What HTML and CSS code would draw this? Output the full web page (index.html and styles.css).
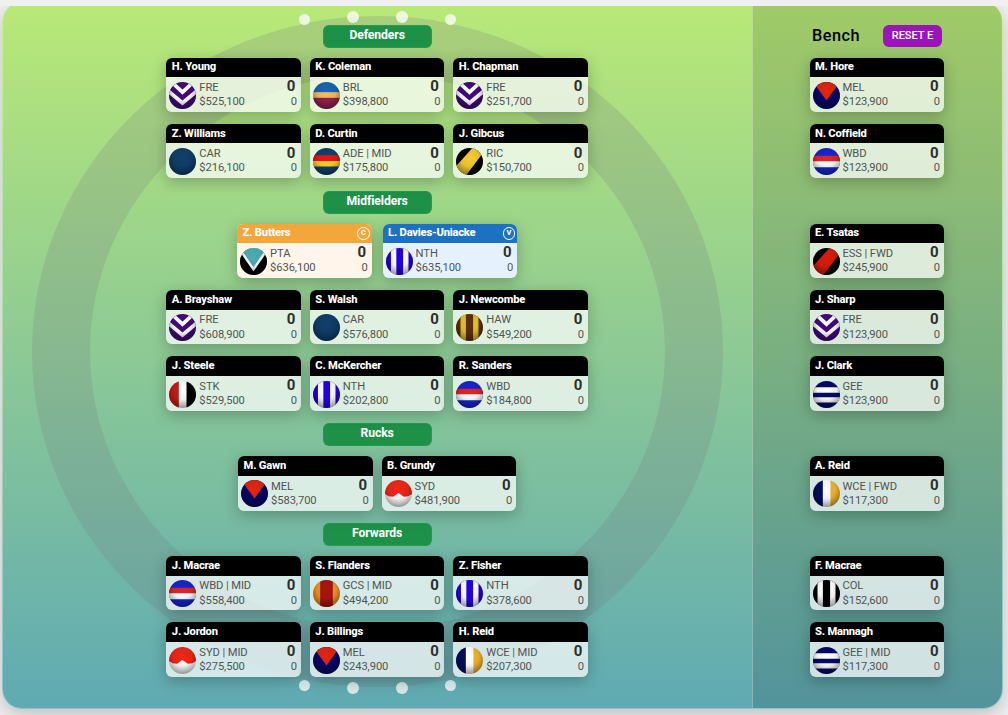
FILE: index.html
```
<!DOCTYPE html>
<html lang="en">
<head>
<meta charset="utf-8">
<title>Team lineup</title>
<link rel="stylesheet" href="styles.css">
</head>
<body>
<svg class="defs" width="0" height="0" aria-hidden="true">
  <defs>
    <clipPath id="round"><circle cx="15" cy="15" r="15"/></clipPath>
    <radialGradient id="shade" cx=".5" cy=".35" r=".68">
      <stop offset="0" stop-color="#000" stop-opacity="0"/>
      <stop offset=".5" stop-color="#000" stop-opacity=".06"/>
      <stop offset="1" stop-color="#000" stop-opacity=".45"/>
    </radialGradient>
    <symbol id="fre" viewBox="0 0 30 30"><g clip-path="url(#round)"><path fill="#43097f" d="M0 0h30v30H0z"/><path fill="none" stroke="#fff" stroke-width="4.2" d="M0-2.500 15 11.300 30-2.500M-1 10 15 23.300 31 10"/><path fill="url(#shade)" d="M0 0h30v30H0z"/></g></symbol>
    <symbol id="brl" viewBox="0 0 30 30"><g clip-path="url(#round)"><path fill="#1b65b3" d="M0 0h30v12H0z"/><path fill="#fdbe57" d="M0 11.500h30v6H0z"/><path fill="#96234f" d="M0 17.500h30v13H0z"/><path fill="url(#shade)" d="M0 0h30v30H0z"/></g></symbol>
    <symbol id="car" viewBox="0 0 30 30"><g clip-path="url(#round)"><path fill="#113e6c" d="M0 0h30v30H0z"/><path fill="url(#shade)" d="M0 0h30v30H0z"/></g></symbol>
    <symbol id="ade" viewBox="0 0 30 30"><g clip-path="url(#round)"><path fill="#14406c" d="M0 0h30v30H0z"/><path fill="#ee1413" d="M0 8h30v7H0z"/><path fill="#f9d22f" d="M0 14.500h30v6H0z"/><path fill="url(#shade)" d="M0 0h30v30H0z"/></g></symbol>
    <symbol id="ric" viewBox="0 0 30 30"><g clip-path="url(#round)"><path fill="#000" d="M0 0h30v30H0z"/><path fill="#f5ca36" d="M19-1h13v4L10 32H-2v-9.500z"/><path fill="url(#shade)" d="M0 0h30v30H0z"/></g></symbol>
    <symbol id="ess" viewBox="0 0 30 30"><g clip-path="url(#round)"><path fill="#000" d="M0 0h30v30H0z"/><path fill="#da1c0c" d="M19-1h13v4L10 32H-2v-9.500z"/><path fill="url(#shade)" d="M0 0h30v30H0z"/></g></symbol>
    <symbol id="mel" viewBox="0 0 30 30"><g clip-path="url(#round)"><path fill="#04066a" d="M0 0h30v30H0z"/><path fill="#e02613" d="M0 0h30L15 20.500z"/><path fill="url(#shade)" d="M0 0h30v30H0z"/></g></symbol>
    <symbol id="wbd" viewBox="0 0 30 30"><g clip-path="url(#round)"><path fill="#1725d2" d="M0 0h30v30H0z"/><path fill="#e02622" d="M0 8.500h30v6.500H0z"/><path fill="#fff" d="M0 14.800h30v6.700H0z"/><path fill="url(#shade)" d="M0 0h30v30H0z"/></g></symbol>
    <symbol id="pta" viewBox="0 0 30 30"><g clip-path="url(#round)"><path fill="#000" d="M0 0h30v30H0z"/><path fill="#fff" d="M-3 0h36L15 26z"/><path fill="#4eadb1" d="M-1-2h32L15 21.500z"/><path fill="url(#shade)" d="M0 0h30v30H0z"/></g></symbol>
    <symbol id="nth" viewBox="0 0 30 30"><g clip-path="url(#round)"><path fill="#2300e6" d="M0 0h30v30H0z"/><path fill="#fff" d="M5.500 0h6v30h-6zM19 0h6v30h-6z"/><path fill="url(#shade)" d="M0 0h30v30H0z"/></g></symbol>
    <symbol id="haw" viewBox="0 0 30 30"><g clip-path="url(#round)"><path fill="#5d300b" d="M0 0h30v30H0z"/><path fill="#e8c231" d="M5 0h6v30H5zM19 0h6v30h-6z"/><path fill="url(#shade)" d="M0 0h30v30H0z"/></g></symbol>
    <symbol id="col" viewBox="0 0 30 30"><g clip-path="url(#round)"><path fill="#000" d="M0 0h30v30H0z"/><path fill="#fff" d="M5 0h6v30H5zM19 0h6v30h-6z"/><path fill="url(#shade)" d="M0 0h30v30H0z"/></g></symbol>
    <symbol id="gcs" viewBox="0 0 30 30"><g clip-path="url(#round)"><path fill="#f59427" d="M0 0h30v30H0z"/><path fill="#a91513" d="M8 0h14v30H8z"/><path fill="url(#shade)" d="M0 0h30v30H0z"/></g></symbol>
    <symbol id="stk" viewBox="0 0 30 30"><g clip-path="url(#round)"><path fill="#c71d15" d="M0 0h11v30H0z"/><path fill="#fff" d="M11 0h8.500v30H11z"/><path fill="#000" d="M19.500 0H30v30H19.500z"/><path fill="url(#shade)" d="M0 0h30v30H0z"/></g></symbol>
    <symbol id="wce" viewBox="0 0 30 30"><g clip-path="url(#round)"><path fill="#030c61" d="M0 0h11v30H0z"/><path fill="#fff" d="M11 0h8.500v30H11z"/><path fill="#f2b52e" d="M19.500 0H30v30H19.500z"/><path fill="url(#shade)" d="M0 0h30v30H0z"/></g></symbol>
    <symbol id="gee" viewBox="0 0 30 30"><g clip-path="url(#round)"><path fill="#030a68" d="M0 0h30v30H0z"/><path fill="#fff" d="M0 7h30v6H0zM0 18h30v6H0z"/><path fill="url(#shade)" d="M0 0h30v30H0z"/></g></symbol>
    <symbol id="syd" viewBox="0 0 30 30"><g clip-path="url(#round)"><path fill="#fff" d="M0 0h30v30H0z"/><path fill="#f02718" d="M0 0h30v15.500l-4 2.500-5 .5-6-4-6 4-5-.5-4-2.500z"/><path fill="url(#shade)" d="M0 0h30v30H0z"/></g></symbol>
  </defs>
</svg>
<div class="topbar"></div>
<main class="field">
  <div class="oval"></div>
  <i class="post" style="left:297px;top:12px"></i><i class="post tall" style="left:344.500px;top:8.500px"></i><i class="post tall" style="left:393.500px;top:8.500px"></i><i class="post" style="left:442.500px;top:12px"></i>
  <i class="post" style="left:297px;top:678px"></i><i class="post tall" style="left:344.500px;top:680px"></i><i class="post tall" style="left:393.500px;top:680px"></i><i class="post" style="left:442.500px;top:678px"></i>

  <section class="ground">
    <h2 class="line">Defenders</h2>
    <div class="row">
      <article class="card"><h3>H. Young</h3><div class="info"><svg><use href="#fre"/></svg><p>FRE<br>$525,100</p><p class="score"><b>0</b>0</p></div></article>
      <article class="card"><h3>K. Coleman</h3><div class="info"><svg><use href="#brl"/></svg><p>BRL<br>$398,800</p><p class="score"><b>0</b>0</p></div></article>
      <article class="card"><h3>H. Chapman</h3><div class="info"><svg><use href="#fre"/></svg><p>FRE<br>$251,700</p><p class="score"><b>0</b>0</p></div></article>
    </div>
    <div class="row">
      <article class="card"><h3>Z. Williams</h3><div class="info"><svg><use href="#car"/></svg><p>CAR<br>$216,100</p><p class="score"><b>0</b>0</p></div></article>
      <article class="card"><h3>D. Curtin</h3><div class="info"><svg><use href="#ade"/></svg><p>ADE | MID<br>$175,800</p><p class="score"><b>0</b>0</p></div></article>
      <article class="card"><h3>J. Gibcus</h3><div class="info"><svg><use href="#ric"/></svg><p>RIC<br>$150,700</p><p class="score"><b>0</b>0</p></div></article>
    </div>
    <h2 class="line">Midfielders</h2>
    <div class="row leaders">
      <article class="card captain"><h3>Z. Butters<span class="badge">C</span></h3><div class="info"><svg><use href="#pta"/></svg><p>PTA<br>$636,100</p><p class="score"><b>0</b>0</p></div></article>
      <article class="card vice"><h3>L. Davies-Uniacke<span class="badge">V</span></h3><div class="info"><svg><use href="#nth"/></svg><p>NTH<br>$635,100</p><p class="score"><b>0</b>0</p></div></article>
    </div>
    <div class="row">
      <article class="card"><h3>A. Brayshaw</h3><div class="info"><svg><use href="#fre"/></svg><p>FRE<br>$608,900</p><p class="score"><b>0</b>0</p></div></article>
      <article class="card"><h3>S. Walsh</h3><div class="info"><svg><use href="#car"/></svg><p>CAR<br>$576,800</p><p class="score"><b>0</b>0</p></div></article>
      <article class="card"><h3>J. Newcombe</h3><div class="info"><svg><use href="#haw"/></svg><p>HAW<br>$549,200</p><p class="score"><b>0</b>0</p></div></article>
    </div>
    <div class="row">
      <article class="card"><h3>J. Steele</h3><div class="info"><svg><use href="#stk"/></svg><p>STK<br>$529,500</p><p class="score"><b>0</b>0</p></div></article>
      <article class="card"><h3>C. McKercher</h3><div class="info"><svg><use href="#nth"/></svg><p>NTH<br>$202,800</p><p class="score"><b>0</b>0</p></div></article>
      <article class="card"><h3>R. Sanders</h3><div class="info"><svg><use href="#wbd"/></svg><p>WBD<br>$184,800</p><p class="score"><b>0</b>0</p></div></article>
    </div>
    <h2 class="line">Rucks</h2>
    <div class="row">
      <article class="card"><h3>M. Gawn</h3><div class="info"><svg><use href="#mel"/></svg><p>MEL<br>$583,700</p><p class="score"><b>0</b>0</p></div></article>
      <article class="card"><h3>B. Grundy</h3><div class="info"><svg><use href="#syd"/></svg><p>SYD<br>$481,900</p><p class="score"><b>0</b>0</p></div></article>
    </div>
    <h2 class="line">Forwards</h2>
    <div class="row">
      <article class="card"><h3>J. Macrae</h3><div class="info"><svg><use href="#wbd"/></svg><p>WBD | MID<br>$558,400</p><p class="score"><b>0</b>0</p></div></article>
      <article class="card"><h3>S. Flanders</h3><div class="info"><svg><use href="#gcs"/></svg><p>GCS | MID<br>$494,200</p><p class="score"><b>0</b>0</p></div></article>
      <article class="card"><h3>Z. Fisher</h3><div class="info"><svg><use href="#nth"/></svg><p>NTH<br>$378,600</p><p class="score"><b>0</b>0</p></div></article>
    </div>
    <div class="row">
      <article class="card"><h3>J. Jordon</h3><div class="info"><svg><use href="#syd"/></svg><p>SYD | MID<br>$275,500</p><p class="score"><b>0</b>0</p></div></article>
      <article class="card"><h3>J. Billings</h3><div class="info"><svg><use href="#mel"/></svg><p>MEL<br>$243,900</p><p class="score"><b>0</b>0</p></div></article>
      <article class="card"><h3>H. Reid</h3><div class="info"><svg><use href="#wce"/></svg><p>WCE | MID<br>$207,300</p><p class="score"><b>0</b>0</p></div></article>
    </div>
  </section>

  <aside class="bench">
    <header class="bench-head"><h2>Bench</h2><button class="reset" type="button">RESET E</button></header>
    <div class="group">
      <article class="card"><h3>M. Hore</h3><div class="info"><svg><use href="#mel"/></svg><p>MEL<br>$123,900</p><p class="score"><b>0</b>0</p></div></article>
      <article class="card"><h3>N. Coffield</h3><div class="info"><svg><use href="#wbd"/></svg><p>WBD<br>$123,900</p><p class="score"><b>0</b>0</p></div></article>
    </div>
    <div class="group">
      <article class="card"><h3>E. Tsatas</h3><div class="info"><svg><use href="#ess"/></svg><p>ESS | FWD<br>$245,900</p><p class="score"><b>0</b>0</p></div></article>
      <article class="card"><h3>J. Sharp</h3><div class="info"><svg><use href="#fre"/></svg><p>FRE<br>$123,900</p><p class="score"><b>0</b>0</p></div></article>
      <article class="card"><h3>J. Clark</h3><div class="info"><svg><use href="#gee"/></svg><p>GEE<br>$123,900</p><p class="score"><b>0</b>0</p></div></article>
    </div>
    <div class="group">
      <article class="card"><h3>A. Reid</h3><div class="info"><svg><use href="#wce"/></svg><p>WCE | FWD<br>$117,300</p><p class="score"><b>0</b>0</p></div></article>
    </div>
    <div class="group">
      <article class="card"><h3>F. Macrae</h3><div class="info"><svg><use href="#col"/></svg><p>COL<br>$152,600</p><p class="score"><b>0</b>0</p></div></article>
      <article class="card"><h3>S. Mannagh</h3><div class="info"><svg><use href="#gee"/></svg><p>GEE | MID<br>$117,300</p><p class="score"><b>0</b>0</p></div></article>
    </div>
  </aside>
</main>
</body>
</html>
```
FILE: styles.css
```
* { box-sizing: border-box; margin: 0; padding: 0; }
body {
  height: 715px;
  padding: 2px 5px 6.500px 2px;
  overflow: hidden;
  background: #f0f0f0;
  font-family: Roboto, "Liberation Sans", sans-serif;
}
.defs { position: absolute; }

/* header strip lying over the top edge of the field */
.topbar { position: absolute; inset: 0 0 auto; z-index: 3; height: 6px; background: #f0f0f0; }

.field {
  position: relative;
  display: flex;
  height: 706.500px;
  border: solid rgba(255, 255, 255, .3);
  border-width: 0 1px 1px;
  border-radius: 20px;
  background: linear-gradient(#b9e977, #5faab3) border-box;
  box-shadow: 0 6px 18px rgba(0, 0, 0, .2);
}
.oval {
  position: absolute;
  left: 29px;
  top: 14px;
  width: 691px;
  height: 671px;
  border: 58px solid rgba(115, 115, 125, .2);
  border-radius: 50%;
}
.post { position: absolute; width: 11px; height: 11px; margin-left: -1px; border-radius: 50%; background: rgba(255, 255, 255, .75); }
.post.tall { width: 12px; height: 12px; }

.ground { position: relative; width: 749px; padding: 22.500px .8px 0 0; }
.line {
  width: 109px;
  height: 23px;
  margin: 0 auto 10px;
  border: 1px solid rgba(40, 160, 85, .7);
  border-radius: 6px;
  background: #1e9148;
  color: #fff;
  font-size: 12.200px;
  font-weight: 700;
  line-height: 19.500px;
  letter-spacing: -.1px;
  text-align: center;
}
.row + .line { margin-top: .4px; }
.row { display: flex; justify-content: center; gap: 9px; height: 66.400px; }
.leaders { gap: 11px; }

.card {
  flex: none;
  width: 134.500px;
  height: 54.400px;
  overflow: hidden;
  border-radius: 6px;
  background: rgba(255, 255, 255, .72);
  box-shadow: 0 4px 15px rgba(0, 0, 0, .25);
}
.card h3 {
  display: flex;
  align-items: center;
  justify-content: space-between;
  height: 19.500px;
  padding: 0 2px 0 5.500px;
  background: #000;
  color: #fff;
  font-size: 11.200px;
  font-weight: 800;
  line-height: 18px;
  letter-spacing: -.22px;
  white-space: nowrap;
}
.info { display: flex; padding: 3.800px 4px 0 3px; color: #505552; font-size: 11.200px; line-height: 14.300px; letter-spacing: -.1px; }
.info svg { flex: none; width: 27px; height: 27px; margin: .8px 3px 0 0; }
.score { margin-left: auto; text-align: right; }
.score b { display: block; margin: -1.500px 1.500px 1.500px 0; color: #2b2f2d; font-size: 15px; font-weight: 700; }

.captain { background: #fff5ea; }
.captain h3 { background: #f3a63a; }
.vice { background: #e6f1fe; }
.vice h3 { background: #1c71c2; }
.badge {
  width: 12.500px;
  height: 12.500px;
  border: 1px solid #fff;
  border-radius: 50%;
  font-size: 7.500px;
  line-height: 10.500px;
  letter-spacing: 0;
  text-align: center;
}

.bench {
  position: relative;
  width: 250px;
  padding: 22.500px 0 0 56.500px;
  border-left: 1px solid rgba(255, 255, 255, .3);
  border-radius: 0 19px 19px 0;
  background: rgba(0, 0, 0, .13);
}
.bench-head { display: flex; align-items: center; justify-content: space-between; width: 132.500px; height: 22px; margin-bottom: 11px; }
.bench-head h2 { padding-left: 2.500px; font-size: 16.300px; font-weight: 500; letter-spacing: .5px; }
.reset {
  width: 59px;
  height: 22px;
  border: 0;
  border-radius: 6px;
  background: #9a14b9;
  color: #fff;
  font: 500 11px/22px Roboto, sans-serif;
}
.group { display: grid; gap: 12px; margin-bottom: 45.400px; }
```
